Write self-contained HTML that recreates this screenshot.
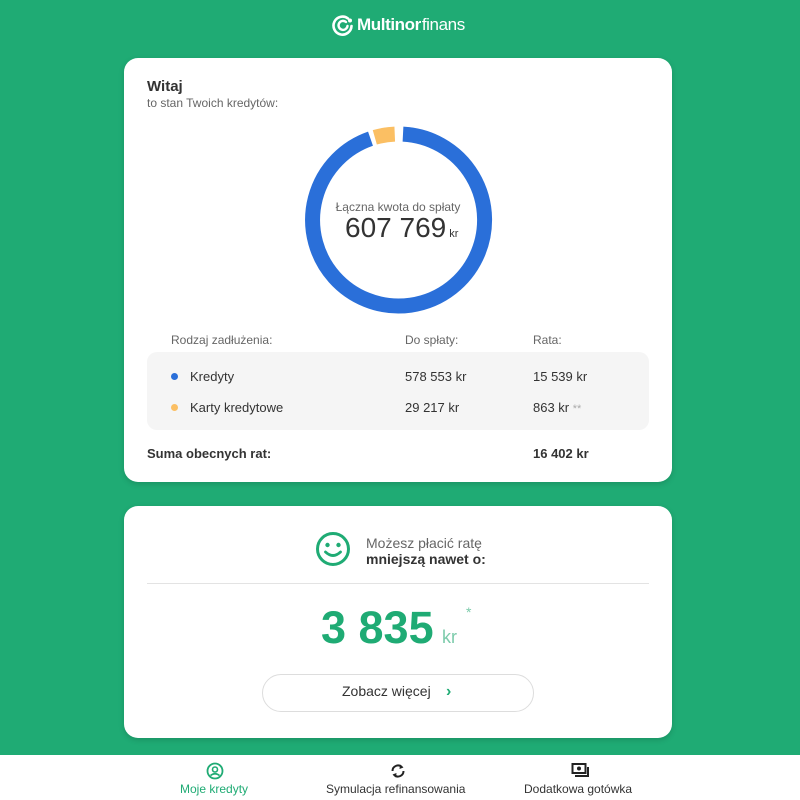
<!DOCTYPE html>
<html><head><meta charset="utf-8"><style>
*{box-sizing:border-box;margin:0;padding:0}
body{width:800px;height:800px;background:#1fab74;font-family:"Liberation Sans",sans-serif;position:relative;overflow:hidden;color:#333}
.logo{position:absolute;top:13px;left:331px;color:#fff;font-size:17px;letter-spacing:-0.4px;display:flex;align-items:center;gap:2px}
.card{position:absolute;left:124px;width:548px;background:#fff;border-radius:14px;box-shadow:0 2px 6px rgba(0,0,0,.15)}
.c1{top:58px;height:424px}
.c2{top:506px;height:232px}
.abs{position:absolute;white-space:nowrap}
.nav{position:absolute;left:0;top:755px;width:800px;height:45px;background:#fff}
</style></head><body>
<div class="logo"><svg width="24" height="24" viewBox="0 0 24 24"><path d="M17 5.5A9 9 0 1 0 20.5 13" fill="none" stroke="#fff" stroke-width="2.6" stroke-linecap="round"/><path d="M15 9A4.5 4.5 0 1 0 16.5 13" fill="none" stroke="#fff" stroke-width="2.4" stroke-linecap="round"/><circle cx="19" cy="7.5" r="2" fill="#fff"/></svg><span style="font-weight:bold">Multinor</span><span style="margin-left:-1px">finans</span></div>

<div class="card c1">
<div class="abs" style="left:23px;top:20px;font-size:15px;font-weight:bold;color:#333">Witaj</div>
<div class="abs" style="left:23px;top:38px;font-size:12px;color:#666">to stan Twoich kredytów:</div>
<svg class="abs" style="left:-124px;top:-58px" width="800" height="400"><path d="M403,134.1 A86,86 0 1 1 370.5,138.7" fill="none" stroke="#2a6fd9" stroke-width="15"/><path d="M374.8,137.3 A86,86 0 0 1 394.75,134.1" fill="none" stroke="#fbbf63" stroke-width="15"/></svg>
<div class="abs" style="left:0;width:548px;text-align:center;top:142px;font-size:12px;color:#666">Łączna kwota do spłaty</div>
<div class="abs" style="left:221px;top:154px;font-size:28px;color:#333">607 769<span style="font-size:11px;margin-left:3px">kr</span></div>
<div class="abs" style="left:47px;top:275px;font-size:12px;color:#666">Rodzaj zadłużenia:</div>
<div class="abs" style="left:281px;top:275px;font-size:12px;color:#666">Do spłaty:</div>
<div class="abs" style="left:409px;top:275px;font-size:12px;color:#666">Rata:</div>
<div class="abs" style="left:23px;top:294px;width:502px;height:78px;background:#f5f5f5;border-radius:10px"></div>
<div class="abs" style="left:47px;top:315px;width:7px;height:7px;border-radius:50%;background:#2a6fd9"></div>
<div class="abs" style="left:66px;top:311px;font-size:13px">Kredyty</div>
<div class="abs" style="left:281px;top:311px;font-size:13px">578 553 kr</div>
<div class="abs" style="left:409px;top:311px;font-size:13px">15 539 kr</div>
<div class="abs" style="left:47px;top:346px;width:7px;height:7px;border-radius:50%;background:#fbbf63"></div>
<div class="abs" style="left:66px;top:342px;font-size:13px">Karty kredytowe</div>
<div class="abs" style="left:281px;top:342px;font-size:13px">29 217 kr</div>
<div class="abs" style="left:409px;top:342px;font-size:13px">863 kr <span style="color:#aaa;font-size:11px">**</span></div>
<div class="abs" style="left:23px;top:388px;font-size:13px;font-weight:bold">Suma obecnych rat:</div>
<div class="abs" style="left:409px;top:388px;font-size:13px;font-weight:bold">16 402 kr</div>
</div>

<div class="card c2">
<svg class="abs" style="left:191px;top:25px" width="36" height="36" viewBox="0 0 36 36"><circle cx="18" cy="18" r="15.5" fill="none" stroke="#1fab74" stroke-width="3"/><circle cx="12.5" cy="14" r="2.2" fill="#1fab74"/><circle cx="23.5" cy="14" r="2.2" fill="#1fab74"/><path d="M10.5 21Q18 28 25.5 21" fill="none" stroke="#1fab74" stroke-width="2.8" stroke-linecap="round"/></svg>
<div class="abs" style="left:242px;top:29px;font-size:14px;color:#666">Możesz płacić ratę</div>
<div class="abs" style="left:242px;top:45px;font-size:14px;font-weight:bold;color:#333">mniejszą nawet o:</div>
<div class="abs" style="left:23px;top:77px;width:502px;height:1px;background:#e3e3e3"></div>
<div class="abs" style="left:197px;top:96px;font-size:45px;font-weight:bold;color:#1fab74">3 835</div>
<div class="abs" style="left:318px;top:121px;font-size:18px;color:#7ccbab">kr</div>
<div class="abs" style="left:342px;top:98px;font-size:14px;color:#7ccbab">*</div>
<div class="abs" style="left:138px;top:168px;width:272px;height:38px;border:1px solid #ddd;border-radius:19px"></div>
<div class="abs" style="left:218px;top:177px;font-size:14px;color:#333">Zobacz więcej</div>
<div class="abs" style="left:322px;top:177px;font-size:16px;color:#1fab74;font-weight:bold">›</div>
</div>

<div class="nav">
<svg class="abs" style="left:206px;top:7px" width="18" height="18" viewBox="0 0 18 18"><circle cx="9" cy="9" r="7.5" fill="none" stroke="#1fab74" stroke-width="1.8"/><circle cx="9" cy="7.5" r="2.5" fill="none" stroke="#1fab74" stroke-width="1.6"/><path d="M4.5 13.5Q9 10 13.5 13.5" fill="none" stroke="#1fab74" stroke-width="1.6"/></svg>
<div class="abs" style="left:180px;top:27px;font-size:12px;color:#1fab74">Moje kredyty</div>
<svg class="abs" style="left:389px;top:7px" width="18" height="18" viewBox="0 0 18 18"><path d="M3.5 9A5.5 5.5 0 0 1 13 5.2M14.5 9A5.5 5.5 0 0 1 5 12.8" fill="none" stroke="#222" stroke-width="2"/><path d="M11 2.5L14.5 5.5 10.5 7Z M7 15.5L3.5 12.5 7.5 11Z" fill="#222"/></svg>
<div class="abs" style="left:326px;top:27px;font-size:12px;color:#333">Symulacja refinansowania</div>
<svg class="abs" style="left:571px;top:7px" width="20" height="18" viewBox="0 0 20 18"><rect x="1.5" y="2" width="13" height="9" fill="none" stroke="#222" stroke-width="2"/><circle cx="8" cy="6.5" r="2" fill="#222"/><path d="M17 5v9H4" fill="none" stroke="#222" stroke-width="2"/></svg>
<div class="abs" style="left:524px;top:27px;font-size:12px;color:#333">Dodatkowa gotówka</div>
</div>
</body></html>
